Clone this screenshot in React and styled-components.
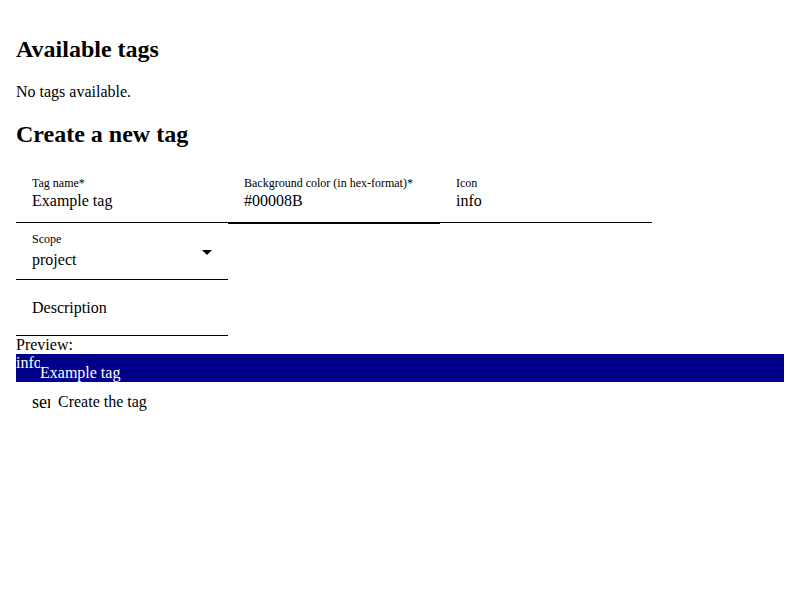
import React from 'react';
import styled, { createGlobalStyle } from 'styled-components';

const GlobalStyle = createGlobalStyle`
  body {
    margin: 8px;
    font-family: "Liberation Serif", "Times New Roman", serif;
    font-size: 16px;
    color: #000;
    background: #fff;
  }
`;

const Page = styled.div`
  padding: 8px;
`;

const Heading = styled.h2`
  font-size: 24px;
  font-weight: bold;
  margin: 20px 0;
`;

const Note = styled.p`
  margin: 16px 0;
`;

const Form = styled.form`
  margin-top: -1px;
`;

const Row = styled.div`
  display: flex;
  align-items: flex-start;
`;

const Field = styled.label`
  position: relative;
  display: flex;
  flex-direction: column;
  width: 212px;
  height: ${p => (p.$focused ? 57 : 56)}px;
  padding: ${p => (p.$select ? 8 : 9)}px 16px 0;
  box-sizing: border-box;
  border-bottom: ${p => (p.$focused ? 2 : 1)}px solid #000;
`;

const FieldLabel = styled.span`
  font-size: 12px;
  line-height: 14px;
  height: 14px;
`;

const FieldValue = styled.span`
  font-size: 16px;
  line-height: 18px;
  margin-top: ${p => (p.$select ? 5 : 2)}px;
`;

const Placeholder = styled.span`
  font-size: 16px;
  line-height: 18px;
  margin-top: 10px;
`;

const Caret = styled.span`
  position: absolute;
  right: 16px;
  top: 26px;
  width: 0;
  height: 0;
  border-left: 5px solid transparent;
  border-right: 5px solid transparent;
  border-top: 5px solid #000;
`;

const PreviewLabel = styled.div`
  line-height: 18px;
`;

const Chip = styled.div`
  display: flex;
  align-items: flex-start;
  height: 28px;
  background: ${p => p.$color};
  color: #fff;
  line-height: 18px;
`;

const ChipIcon = styled.span`
  width: 24px;
  overflow: hidden;
  white-space: nowrap;
`;

const ChipText = styled.span`
  margin-top: 10px;
`;

const SubmitButton = styled.button`
  display: flex;
  align-items: center;
  gap: 8px;
  margin-top: 11px;
  padding: 0 16px;
  background: transparent;
  border: none;
  font-family: "Liberation Serif", "Times New Roman", serif;
  font-size: 16px;
  line-height: 18px;
  color: #000;
`;

const ButtonIcon = styled.span`
  width: 18px;
  overflow: hidden;
  white-space: nowrap;
  font-size: 18px;
`;

export default function App() {
  const color = '#00008B';
  return (
    <Page>
      <GlobalStyle />
      <Heading>Available tags</Heading>
      <Note>No tags available.</Note>
      <Heading>Create a new tag</Heading>
      <Form>
        <Row>
          <Field>
            <FieldLabel>Tag name*</FieldLabel>
            <FieldValue>Example tag</FieldValue>
          </Field>
          <Field $focused>
            <FieldLabel>Background color (in hex-format)*</FieldLabel>
            <FieldValue>{color}</FieldValue>
          </Field>
          <Field>
            <FieldLabel>Icon</FieldLabel>
            <FieldValue>info</FieldValue>
          </Field>
        </Row>
        <Row>
          <Field $select>
            <FieldLabel>Scope</FieldLabel>
            <FieldValue $select>project</FieldValue>
            <Caret />
          </Field>
        </Row>
        <Row>
          <Field>
            <Placeholder>Description</Placeholder>
          </Field>
        </Row>
        <PreviewLabel>Preview:</PreviewLabel>
        <Chip $color={color}>
          <ChipIcon>info</ChipIcon>
          <ChipText>Example tag</ChipText>
        </Chip>
        <SubmitButton type="button">
          <ButtonIcon>send</ButtonIcon>
          Create the tag
        </SubmitButton>
      </Form>
    </Page>
  );
}
